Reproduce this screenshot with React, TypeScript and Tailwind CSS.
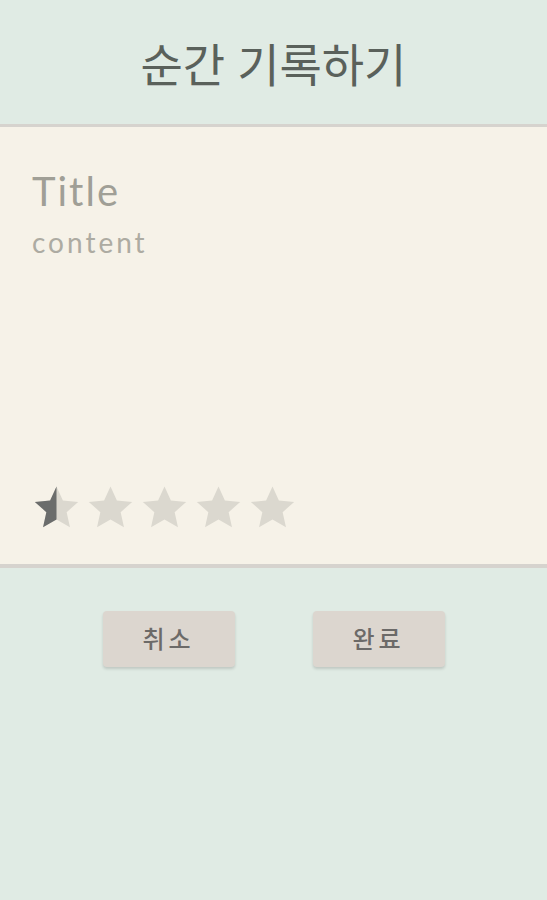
import React from "react"

const STAR = "M12 2.5l2.9 6.3 6.9.7-5.2 4.6 1.5 6.8L12 17.4l-6.1 3.5 1.5-6.8L2.2 9.5l6.9-.7z"

function Star({ fill }: { fill: number }) {
  return (
    <svg viewBox="0 0 24 24" className="h-[53px] w-[53px]">
      <defs>
        <clipPath id="half">
          <rect x="0" y="0" width="12" height="24" />
        </clipPath>
      </defs>
      <path d={STAR} fill="#dbd8cf" />
      {fill > 0 && <path d={STAR} fill="#6b6d6c" clipPath="url(#half)" />}
    </svg>
  )
}

export default function App() {
  return (
    <div className="min-h-[900px] w-full bg-[#e0ebe4] flex flex-col" style={{ fontFamily: '"Noto Sans", "Noto Sans CJK KR", sans-serif' }}>
      {/* Header */}
      <div className="h-[124px] flex items-center justify-center pt-[4px]">
        <h1 className="text-[46px] text-[#5a615b]">순간 기록하기</h1>
      </div>

      {/* Card */}
      <div className="border-t-[3px] border-b-[4px] border-[#d6d3ce] bg-[#f6f2e8] h-[444px] flex flex-col px-[32px] pt-[40px] pb-[30px]">
        <div className="text-[40px] leading-[48px] text-[#a09f96] tracking-[2px]" style={{ fontFamily: "Lato, sans-serif" }}>Title</div>
        <div className="text-[28px] leading-[34px] text-[#adaba2] tracking-[3px] mt-[10px]" style={{ fontFamily: "Lato, sans-serif" }}>content</div>
        <div className="mt-auto flex gap-[1px] -ml-[2px]">
          <Star fill={0.5} />
          <Star fill={0} />
          <Star fill={0} />
          <Star fill={0} />
          <Star fill={0} />
        </div>
      </div>

      {/* Buttons */}
      <div className="flex justify-center gap-[78px] mt-[43px]">
        <button className="w-[132px] h-[56px] rounded-[4px] bg-[#dcd6cf] shadow-[0_2px_3px_rgba(0,0,0,0.15)] text-[24px] font-medium text-[#6c6a68] tracking-[4px]">취소</button>
        <button className="w-[132px] h-[56px] rounded-[4px] bg-[#dcd6cf] shadow-[0_2px_3px_rgba(0,0,0,0.15)] text-[24px] font-medium text-[#6c6a68] tracking-[4px]">완료</button>
      </div>
    </div>
  )
}
